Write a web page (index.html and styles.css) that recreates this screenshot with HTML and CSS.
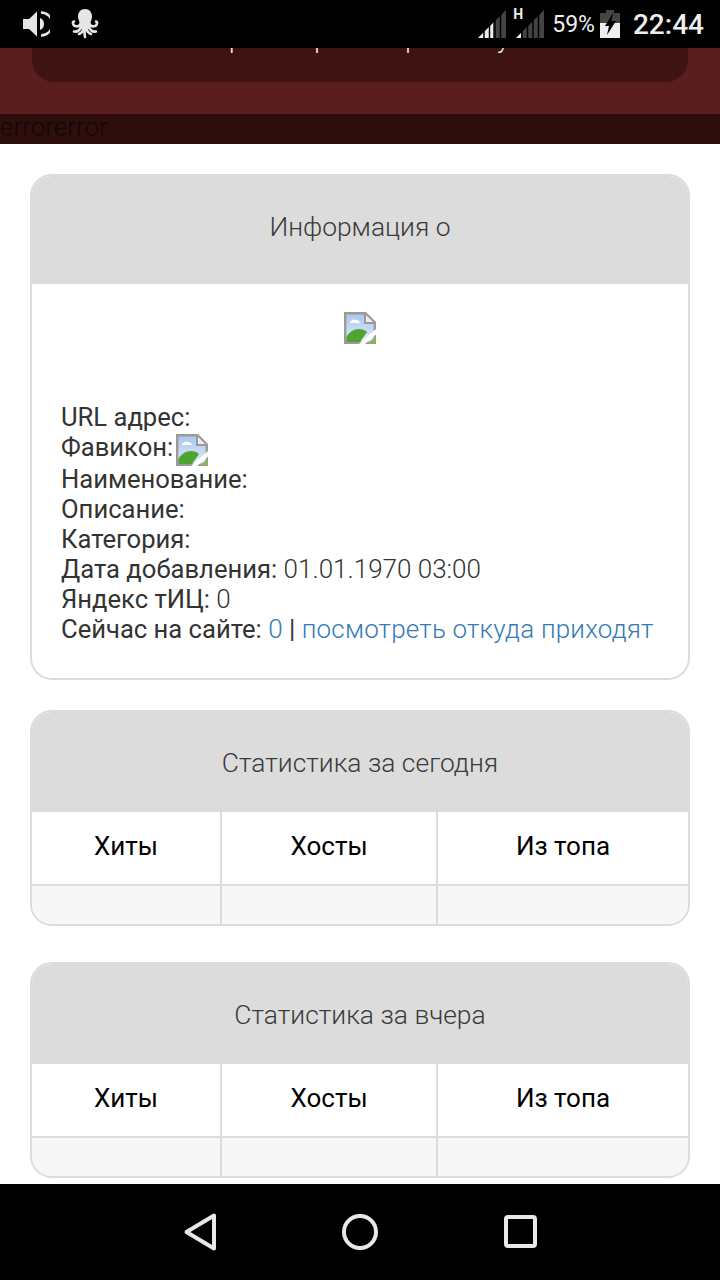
FILE: index.html
```html
<!DOCTYPE html>
<html lang="en">
<head>
    <meta charset="UTF-8">
    <meta name="viewport" content="width=device-width, initial-scale=1.0">
    <title>Информация о</title>
    <link rel="stylesheet" href="styles.css">
</head>
<body>
    <div class="status-bar">
        <div class="status-left">
            <svg class="icon-sound" width="28" height="28" viewBox="0 0 28 28">
                <path d="M1 9h6l8-7.500v25L7 19H1z" fill="#e6e6e6"/>
                <path d="M18 8a6.500 6.500 0 0 1 0 12z" fill="#e6e6e6"/>
                <path d="M19 2.500a11.500 11.500 0 0 1 0 23" fill="none" stroke="#e6e6e6" stroke-width="2.600"/>
            </svg>
            <svg class="icon-octopus" width="30" height="30" viewBox="0 0 30 30">
                <path d="M15 0c4.500 0 7 3.500 7 7.500 0 3-1.500 4.500-1.500 6.500 0 2 .5 4-1 6h-9c-1.500-2-1-4-1-6 0-2-1.500-3.500-1.500-6.500C8 3.500 10.500 0 15 0z" fill="#e6e6e6"/>
                <path d="M10.500 15c-1.500 3-6.500 3.500-7.500-.5-.2-1 .3-1.800 1-2M11 18c-1 3-3 5-7 4.500M13.500 19c0 3-2 5-4.500 6M14.500 19c0 4 0 6.500.5 9M16.500 19c0 3 2 5 4.500 6M19 18c1 3 3 5 7 4.500M19.500 15c1.500 3 6.500 3.500 7.500-.5.200-1-.3-1.800-1-2" fill="none" stroke="#e6e6e6" stroke-width="2.600" stroke-linecap="round"/>
            </svg>
        </div>
        <div class="status-right">
            <svg class="signal" width="28" height="28" viewBox="0 0 28 28">
                <path d="M0 28 28 0v28z" fill="#444"/>
                <path d="M0 28 15 13v15z" fill="#eee"/>
                <path d="M6 28v-9M11.500 28V14M17 28V9M22.500 28V4" stroke="#000" stroke-width="1.500"/>
            </svg>
            <div class="net">
                <span class="net-type">H</span>
                <svg class="signal" width="28" height="28" viewBox="0 0 28 28">
                    <path d="M0 28 28 0v28z" fill="#444"/>
                    <path d="M0 28 5 23v5z" fill="#eee"/>
                    <path d="M6 28v-9M11.500 28V14M17 28V9M22.500 28V4" stroke="#000" stroke-width="1.500"/>
                </svg>
            </div>
            <span class="battery-text">59%</span>
            <svg class="icon-battery" width="20" height="28" viewBox="0 0 20 28">
                <path d="M6 0h8v3h6v25H0V3h6z" fill="#444"/>
                <path d="M0 13h20v15H0z" fill="#eee"/>
                <path d="M13 3 5 16h4l-2 9 9-14h-4.500z" fill="#000"/>
            </svg>
            <span class="clock">22:44</span>
        </div>
    </div>

    <div class="top-band">
        <div class="top-box"><span class="top-box-text">Просмотр сайта рейтингу</span></div>
    </div>
    <div class="error-band">errorerror</div>

    <div class="content">
        <section class="card">
            <h2 class="card-head card-head-tall">Информация о</h2>
            <div class="card-body">
                <div class="logo-row">
                    <svg class="broken-img" width="32" height="32" viewBox="0 0 16 16"><use href="#broken"/></svg>
                </div>
                <div class="info">
                    <div><b>URL адрес:</b></div>
                    <div class="favicon-line"><b>Фавикон:</b> <svg class="broken-img" width="32" height="32" viewBox="0 0 16 16"><use href="#broken"/></svg></div>
                    <div><b>Наименование:</b></div>
                    <div><b>Описание:</b></div>
                    <div><b>Категория:</b></div>
                    <div><b>Дата добавления:</b> 01.01.1970 03:00</div>
                    <div><b>Яндекс тИЦ:</b> 0</div>
                    <div><b>Сейчас на сайте:</b> <a href="#">0</a> <b>|</b> <a href="#">посмотреть откуда приходят</a></div>
                </div>
            </div>
        </section>

        <section class="card">
            <h2 class="card-head">Статистика за сегодня</h2>
            <table class="stats">
                <tr><th class="col-a">Хиты</th><th class="col-b">Хосты</th><th>Из топа</th></tr>
                <tr><td></td><td></td><td></td></tr>
            </table>
        </section>

        <section class="card">
            <h2 class="card-head">Статистика за вчера</h2>
            <table class="stats">
                <tr><th class="col-a">Хиты</th><th class="col-b">Хосты</th><th>Из топа</th></tr>
                <tr><td></td><td></td><td></td></tr>
            </table>
        </section>
    </div>

    <div class="nav-bar">
        <svg width="38" height="40" viewBox="0 0 38 40"><path d="M4.500 20 32 3.500v33z" fill="none" stroke="#e8e8e8" stroke-width="4" stroke-linejoin="round"/></svg>
        <svg width="38" height="38" viewBox="0 0 38 38"><circle cx="19" cy="19" r="16" fill="none" stroke="#e8e8e8" stroke-width="4"/></svg>
        <svg width="38" height="38" viewBox="0 0 38 38"><rect x="6" y="4" width="29" height="29" rx="2" fill="none" stroke="#e8e8e8" stroke-width="4"/></svg>
    </div>

    <svg class="defs" width="0" height="0">
        <symbol id="broken" viewBox="0 0 16 16">
            <defs>
                <linearGradient id="sky" x1="0" y1="0" x2="0" y2="1">
                    <stop offset="0" stop-color="#a9c8ee"/>
                    <stop offset="1" stop-color="#dfeafa"/>
                </linearGradient>
            </defs>
            <path d="M0 0h11l5 5v11H0z" fill="#9a9a9a"/>
            <path d="M1.200 1.200H10V6h4.800v8.800H1.200z" fill="url(#sky)"/>
            <path d="M11 1.500 14.500 5H11z" fill="#eee"/>
            <path d="M3 5.500c.5-1.500 2-2.200 3-1.500 1 0 2 .7 2 1.500z" fill="#fff"/>
            <path d="M1.200 15v-2.500C3 9 8 7 11.500 10L8 15z" fill="#4fa32f"/>
            <path d="M7.500 16 16 8.500v2.700L10.500 16z" fill="#fff"/>
            <path d="M11.500 16 16 12.200V16z" fill="#8fae6e"/>
        </symbol>
    </svg>
</body>
</html>
```
FILE: styles.css
```css
* {
    margin: 0;
    padding: 0;
    box-sizing: border-box;
}

html, body {
    height: 1280px;
    overflow: hidden;
}

body {
    display: flex;
    flex-direction: column;
    font-family: Roboto, "Liberation Sans", sans-serif;
    font-weight: 300;
    color: #333;
    background: #fff;
}

.status-bar {
    flex: none;
    height: 48px;
    padding: 0 16px 0 22px;
    display: flex;
    align-items: center;
    justify-content: space-between;
    background: #000;
}

.status-left {
    display: flex;
    align-items: center;
    gap: 20px;
}

.status-right {
    display: flex;
    align-items: center;
    color: #eee;
}

.net {
    position: relative;
    margin-left: 10px;
}

.net-type {
    position: absolute;
    left: -3px;
    top: -4px;
    font-size: 14px;
    font-weight: 700;
}

.signal {
    display: block;
}

.battery-text {
    margin-left: 8px;
    font-size: 23px;
    font-weight: 400;
}

.icon-battery {
    margin-left: 5px;
}

.clock {
    margin-left: 13px;
    font-size: 28px;
    font-weight: 500;
}

.top-band {
    flex: none;
    height: 66px;
    padding: 0 32px;
    background: #5a1e1e;
}

.top-box {
    height: 34px;
    overflow: hidden;
    text-align: center;
    background: #3e1312;
    border-radius: 0 0 22px 22px;
}

.top-box-text {
    display: block;
    margin-top: -22px;
    font-size: 26px;
    line-height: 26px;
    letter-spacing: -0.5px;
    color: #eee;
}

.error-band {
    flex: none;
    height: 30px;
    font-size: 26px;
    line-height: 27px;
    color: #160605;
    background: #2d0e0c;
}

.content {
    flex: 1;
    min-height: 0;
    padding: 30px 30px 0;
}

.card {
    margin-bottom: 30px;
    border: 2px solid #dcdcdc;
    border-radius: 22px;
    overflow: hidden;
    background: #fff;
}

.card + .card + .card {
    margin-top: 36px;
}

.card-head {
    height: 102px;
    margin: -2px -2px 0;
    font-size: 26.400px;
    font-weight: 300;
    line-height: 106px;
    text-align: center;
    color: #3a3a3a;
    background: #dcdcdc;
}

.card-head-tall {
    height: 110px;
    line-height: 106px;
}

.card-body {
    padding: 28px 29px 34px;
}

.logo-row {
    height: 90px;
    text-align: center;
}

.info {
    font-size: 26px;
    line-height: 30px;
}

.info b {
    font-size: 25.600px;
    font-weight: 400;
    color: #333;
}

.info a {
    letter-spacing: 0.2px;
    color: #337ab7;
    text-decoration: none;
}

.broken-img {
    filter: blur(0.4px);
}

.favicon-line {
    height: 32px;
}

.favicon-line .broken-img {
    margin-left: -4px;
    vertical-align: -10px;
}

.stats {
    width: 100%;
    border-collapse: collapse;
    table-layout: fixed;
}

.stats th {
    height: 73px;
    padding-bottom: 5px;
    font-size: 26px;
    font-weight: 400;
    color: #000;
    border-bottom: 2px solid #dcdcdc;
    border-right: 2px solid #dcdcdc;
}

.stats td {
    height: 39px;
    background: #f7f7f7;
    border-right: 2px solid #dcdcdc;
}

.stats th:last-child,
.stats td:last-child {
    border-right: none;
}

.col-a {
    width: 189px;
}

.col-b {
    width: 216px;
}

.nav-bar {
    flex: none;
    height: 96px;
    padding: 0 182px;
    display: flex;
    align-items: center;
    justify-content: space-between;
    background: #000;
}

.defs {
    position: absolute;
}
```
